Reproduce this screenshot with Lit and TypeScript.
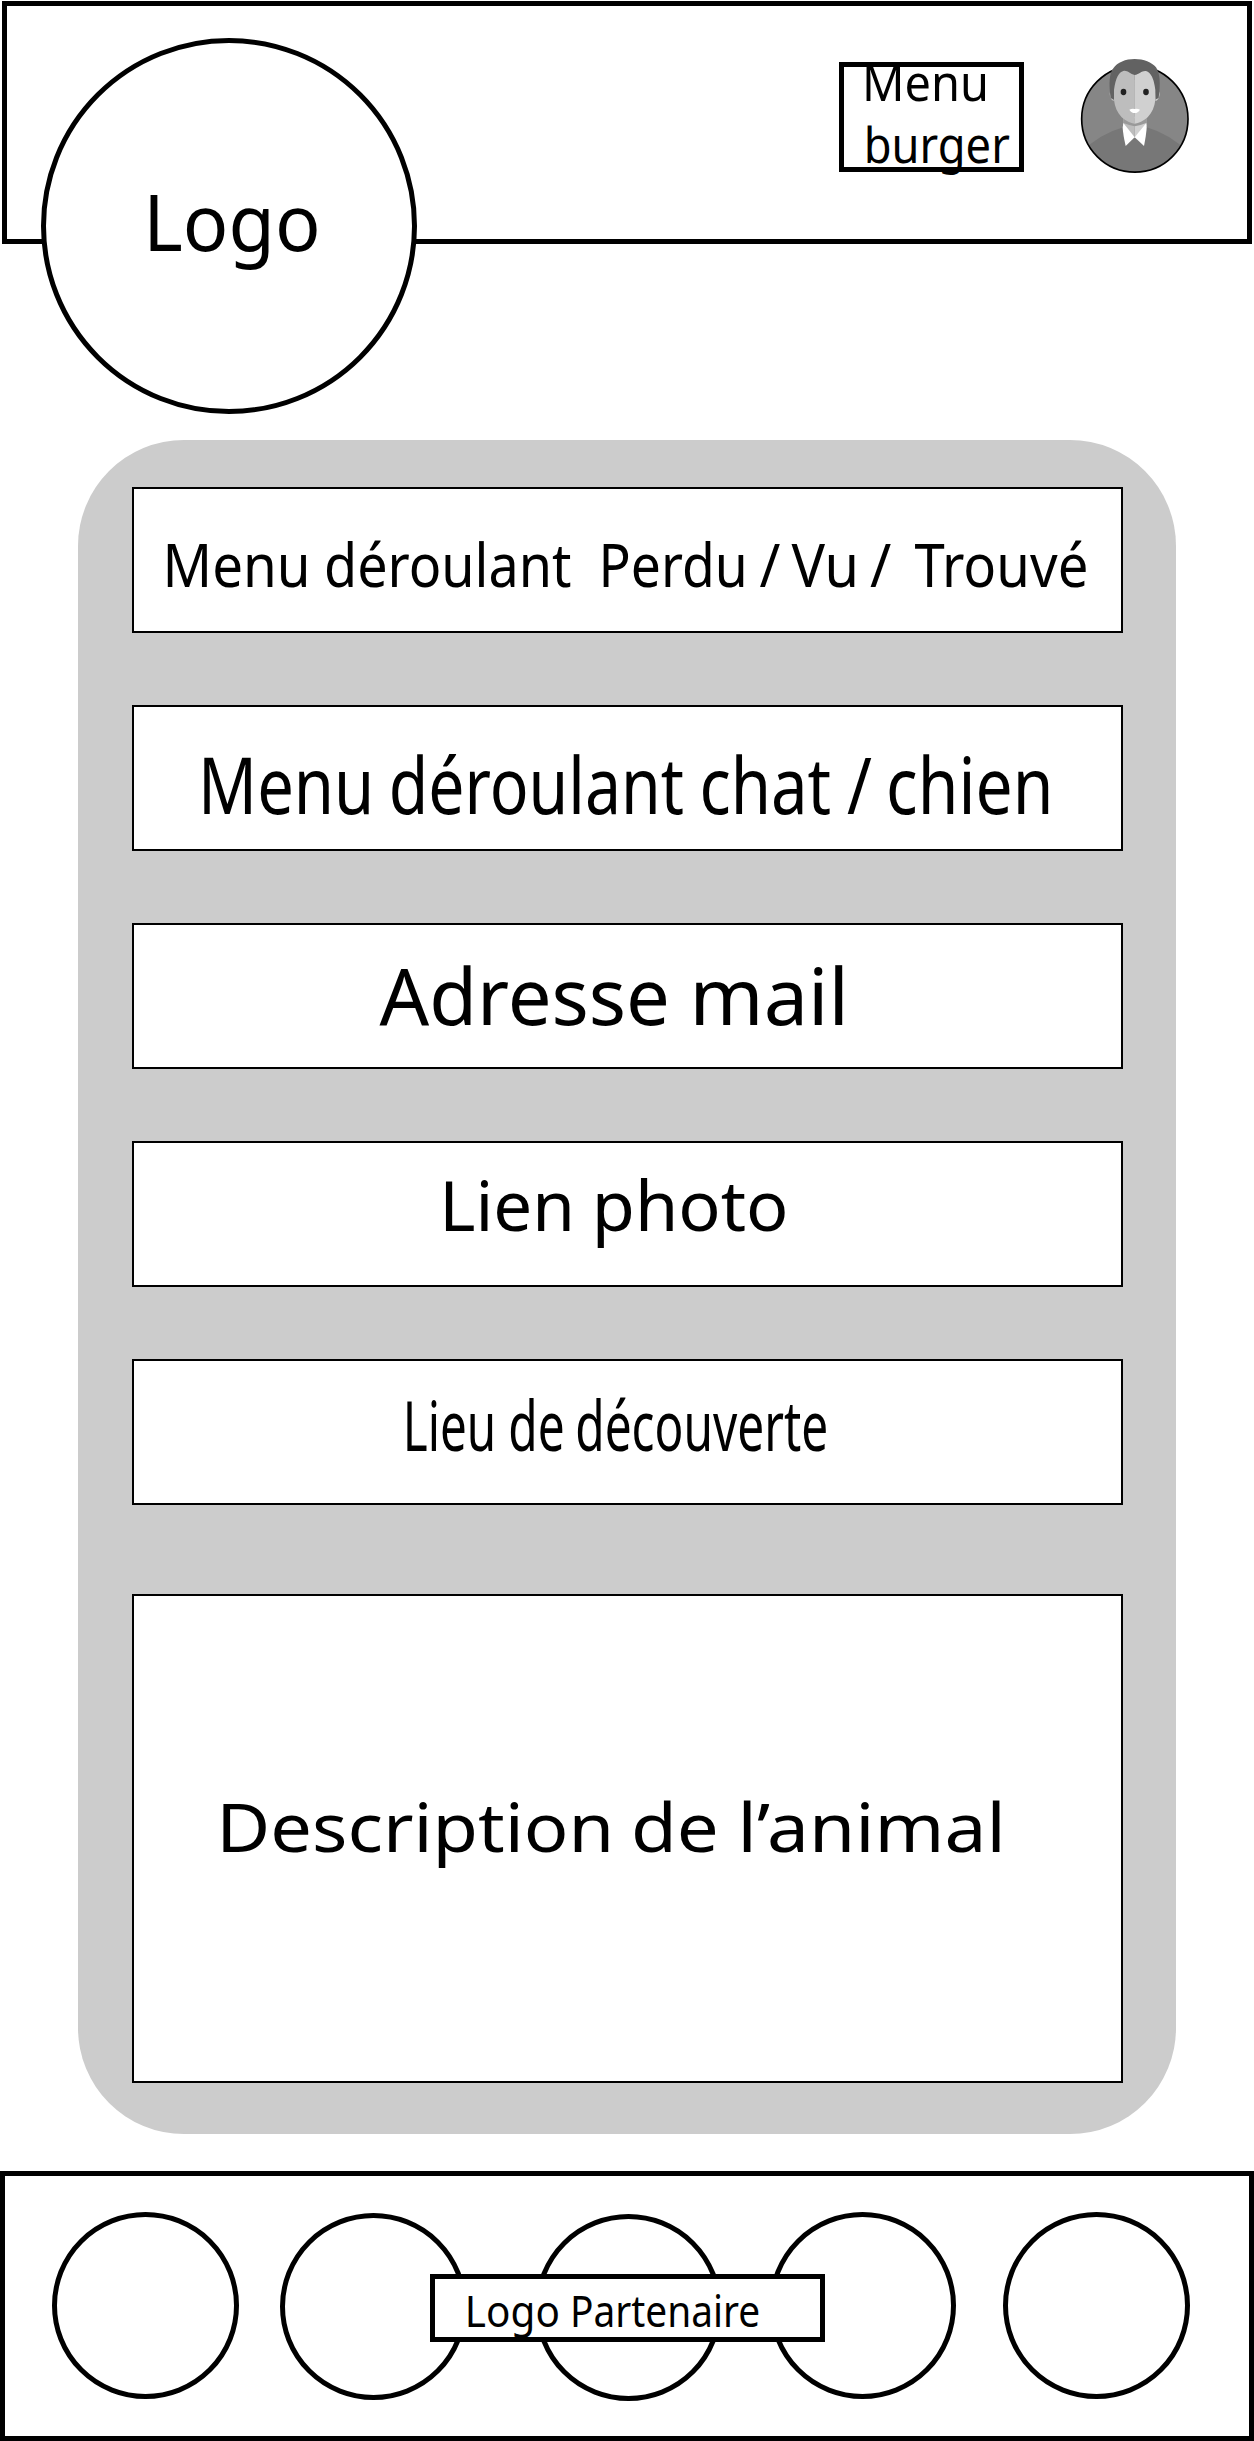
import { LitElement, html, svg, css } from "lit";
import { customElement, property } from "lit/decorators.js";

const FAMILY = '"Noto Sans", "Open Sans", sans-serif';

/** A word and the horizontal extent its ink fills inside the box. */
type Word = [text: string, left: number, right: number];

interface Line {
  baseline: number;
  size: number;
  words: Word[];
}

const pen = document.createElement("canvas").getContext("2d")!;

/** Stretches or condenses one word so that it fills its extent. */
const fitWord = ([text, left, right]: Word, line: Line) => {
  pen.font = `${line.size}px ${FAMILY}`;
  const m = pen.measureText(text);
  const ink = m.actualBoundingBoxLeft + m.actualBoundingBoxRight;
  const k = (right - left) / ink;
  return svg`<text
    x=${m.actualBoundingBoxLeft}
    y="0"
    font-size=${line.size}
    transform="translate(${left} ${line.baseline}) scale(${k} 1)"
  >${text}</text>`;
};

@customElement("scaled-label")
export class ScaledLabel extends LitElement {
  @property({ attribute: false }) lines: Line[] = [];

  static styles = css`
    :host {
      display: block;
      width: 100%;
      height: 100%;
    }
    .canvas {
      display: block;
      width: 100%;
      height: 100%;
      overflow: visible;
      font-family: "Noto Sans", "Open Sans", sans-serif;
      fill: #000;
    }
  `;

  render() {
    return html`<svg class="canvas">
      ${this.lines.map((l) => l.words.map((w) => fitWord(w, l)))}
    </svg>`;
  }
}

@customElement("user-avatar")
export class UserAvatar extends LitElement {
  static styles = css`
    :host {
      display: block;
      width: 130px;
      height: 130px;
    }
    .art {
      display: block;
      width: 130px;
      height: 130px;
    }
  `;

  render() {
    return html`<svg class="art" viewBox="0 0 390 390">
      <defs>
        <clipPath id="disc"><circle cx="194.5" cy="207" r="159" /></clipPath>
      </defs>
      <circle cx="194.5" cy="207" r="159" fill="#868686" />
      <g clip-path="url(#disc)">
        <path d="M30 310Q88 252 160 232L230 232Q300 252 358 310V390H30Z" fill="#777" />
      </g>
      <circle cx="194.5" cy="207" r="159.500" fill="none" stroke="#000" stroke-width="5" />
      <path d="M160 200H194V264L160 226Z" fill="#bdbdbd" />
      <path d="M194 200H229V226L194 264Z" fill="#d0d0d0" />
      <path d="M160 205V219Q178 226 194 229Q212 226 229 219V205Z" fill="#999" />
      <path d="M124 122Q117 126 120 138Q123 152 132 153Z" fill="#bdbdbd" />
      <path d="M264 122Q271 126 268 138Q265 152 256 153Z" fill="#d0d0d0" />
      <path d="M122 144C116 100 118 70 130 55C142 37 167 27 194 27C221 27 246 37 258 52C270 70 272 100 266 144L258 148L250 90H138L132 149Z" fill="#626262" />
      <path d="M194 75C180 72 172 60 160 63C146 67 137 84 132 120V150C134 170 142 188 155 202C168 214 182 219 194 221Z" fill="#bdbdbd" />
      <path d="M194 75C208 72 216 61 228 63C243 68 252 86 256 120V150C254 170 246 188 233 202C220 214 206 219 194 221Z" fill="#d0d0d0" />
      <ellipse cx="160.500" cy="126" rx="8.500" ry="9.500" fill="#222" />
      <ellipse cx="228" cy="126" rx="8.500" ry="9.500" fill="#222" />
      <path d="M178 179Q186 175 194 177Q202 175 210 179Q204 189 194 189Q184 189 178 179Z" fill="#fff" />
      <path d="M160 219L194 262L167 288Q159 252 158 233Z" fill="#fff" />
      <path d="M229 219L194 262L222 288Q229 252 230 233Z" fill="#fff" />
    </svg>`;
  }
}

const LOGO: Line[] = [{ baseline: 207.7, size: 78, words: [["Logo", 104, 270.5]] }];

const MENU: Line[] = [
  { baseline: 34, size: 50, words: [["Menu", 21.7, 141.3]] },
  { baseline: 95.7, size: 50, words: [["burger", 23.3, 165.3]] },
];

const FIELDS: Line[] = [
  {
    baseline: 98,
    size: 60,
    words: [
      ["Menu", 33.1, 172],
      ["déroulant", 192.7, 436.9],
      ["Perdu", 469, 609.3],
      ["/", 625.4, 646],
      ["Vu", 657.5, 720.3],
      ["/", 736, 757],
      ["Trouvé", 780.4, 951.8],
    ],
  },
  {
    baseline: 107,
    size: 78,
    words: [
      ["Menu", 69.9, 235.2],
      ["déroulant", 258, 548.9],
      ["chat", 568.8, 696.2],
      ["/", 713, 737.9],
      ["chien", 755.5, 914.3],
    ],
  },
  {
    baseline: 100,
    size: 78,
    words: [
      ["Adresse", 245.5, 533],
      ["mail", 561.7, 708.7],
    ],
  },
  {
    baseline: 87.7,
    size: 69.5,
    words: [
      ["Lien", 311.2, 436.1],
      ["photo", 462.8, 651.5],
    ],
  },
  {
    baseline: 90,
    size: 70,
    words: [
      ["Lieu", 272.9, 358.7],
      ["de", 376.3, 428.3],
      ["découverte", 443.3, 691.8],
    ],
  },
];

const DESCRIPTION: Line[] = [
  {
    baseline: 256,
    size: 67,
    words: [
      ["Description", 88.9, 474.4],
      ["de", 500.4, 581.8],
      ["l’animal", 609.2, 865.8],
    ],
  },
];

const PARTNERS: Line[] = [
  {
    baseline: 47.7,
    size: 43,
    words: [
      ["Logo", 33.6, 123],
      ["Partenaire", 138.5, 324],
    ],
  },
];

@customElement("app-root")
export class AppRoot extends LitElement {
  static styles = css`
    :host {
      display: block;
      width: 1254px;
      height: 2441px;
      overflow: hidden;
      background: #fff;
    }
    *,
    *::before {
      box-sizing: border-box;
    }
    .page {
      position: relative;
      display: flex;
      flex-direction: column;
      height: 2441px;
      padding-top: 1px;
    }
    .header {
      display: flex;
      align-items: flex-start;
      width: 1250px;
      height: 243px;
      margin-left: 2px;
      padding-left: 832px;
      border: 5px solid #000;
    }
    .logo {
      position: absolute;
      left: 41px;
      top: 38px;
      width: 376px;
      height: 376px;
      border: 5px solid #000;
      border-radius: 50%;
      background: #fff;
    }
    .menu {
      flex: none;
      width: 185px;
      height: 110px;
      margin-top: 56px;
      border: 5px solid #000;
    }
    .avatar {
      flex: none;
      margin: 44px 0 0 46px;
    }
    .panel {
      display: flex;
      flex-direction: column;
      gap: 72px;
      width: 1098px;
      height: 1694px;
      margin: 196px 0 0 78px;
      padding: 47px 53px 51px 54px;
      border-radius: 106px;
      background: #ccc;
    }
    .field {
      flex: none;
      height: 146px;
      border: 2px solid #000;
      background: #fff;
    }
    .description {
      height: 489px;
      margin-top: 17px;
    }
    .footer {
      position: relative;
      display: flex;
      align-items: flex-start;
      height: 270px;
      margin-top: 37px;
      padding: 36px 0 0 47px;
      border: 5px solid #000;
    }
    .partner {
      flex: none;
      width: 187px;
      height: 187px;
      border: 5px solid #000;
      border-radius: 50%;
    }
    .partner:nth-child(2) {
      margin: 1px 0 0 41px;
    }
    .partner:nth-child(3) {
      margin: 2px 0 0 68px;
    }
    .partner:nth-child(4),
    .partner:nth-child(5) {
      margin-left: 47px;
    }
    .caption {
      position: absolute;
      left: 425px;
      top: 98px;
      width: 395px;
      height: 68px;
      border: 5px solid #000;
      background: #fff;
    }
  `;

  render() {
    return html`<div class="page">
      <header class="header">
        <div class="menu"><scaled-label .lines=${MENU}></scaled-label></div>
        <user-avatar class="avatar"></user-avatar>
      </header>
      <div class="logo"><scaled-label .lines=${LOGO}></scaled-label></div>
      <main class="panel">
        ${FIELDS.map(
          (line) => html`<div class="field"><scaled-label .lines=${[line]}></scaled-label></div>`
        )}
        <div class="field description"><scaled-label .lines=${DESCRIPTION}></scaled-label></div>
      </main>
      <footer class="footer">
        ${[1, 2, 3, 4, 5].map(() => html`<div class="partner"></div>`)}
        <div class="caption"><scaled-label .lines=${PARTNERS}></scaled-label></div>
      </footer>
    </div>`;
  }
}
